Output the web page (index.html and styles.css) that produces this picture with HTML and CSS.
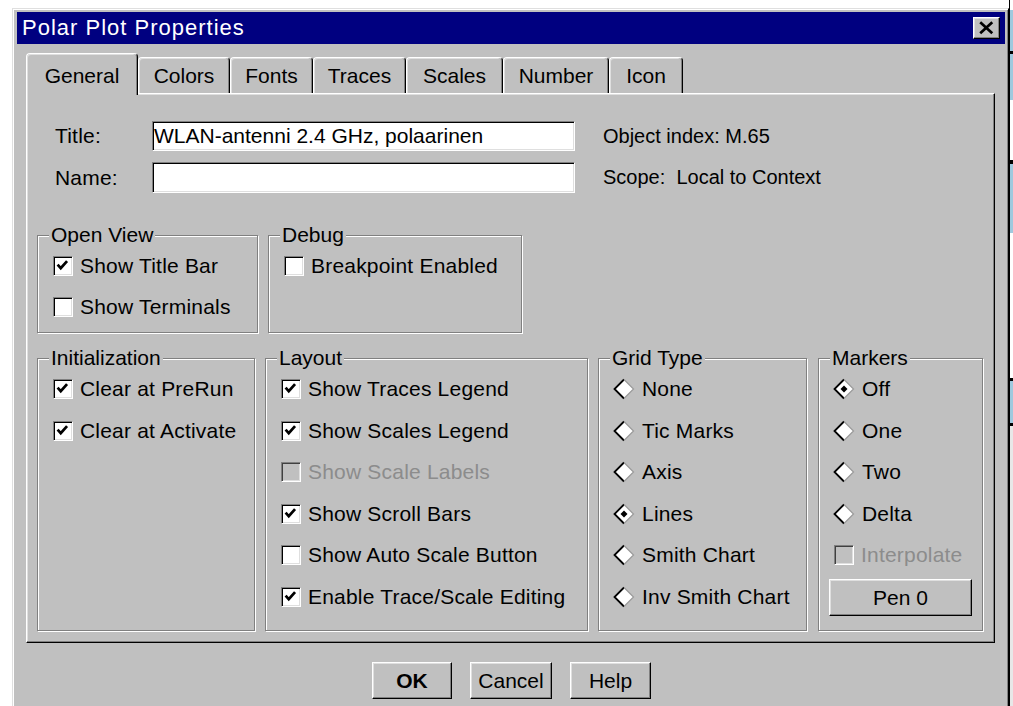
FILE: index.html
```html
<!DOCTYPE html>
<html lang="en">
<head>
<meta charset="utf-8">
<title>Polar Plot Properties</title>
<link rel="stylesheet" href="styles.css">
</head>
<body>
<div class="desk">
  <div class="dialog">
    <div class="titlebar">
      <span class="title-text">Polar Plot Properties</span>
      <button class="close-btn" type="button" aria-label="Close">
        <svg width="27" height="22" viewBox="0 0 27 22"><path d="M7.5 5 L20 16.5 M20 5 L7.5 16.5" stroke="#000" stroke-width="2.8" fill="none"/></svg>
      </button>
    </div>

    <div class="dialog-body">
      <div class="tabs">
        <div class="tab active w-general">General</div>
        <div class="tab w-colors">Colors</div>
        <div class="tab w-fonts">Fonts</div>
        <div class="tab w-traces">Traces</div>
        <div class="tab w-scales">Scales</div>
        <div class="tab w-number">Number</div>
        <div class="tab w-icon">Icon</div>
      </div>

      <div class="panel">
        <div class="ident">
          <span class="field-label">Title:</span>
          <div class="textbox h30">WLAN-antenni 2.4 GHz, polaarinen</div>
          <span class="info">Object index: M.65</span>
          <span class="field-label">Name:</span>
          <div class="textbox h31"></div>
          <span class="info">Scope:  Local to Context</span>
        </div>

        <div class="group-row row-one">
          <div class="group w-openview">
            <div class="group-title">Open View</div>
            <div class="opt"><span class="check"><svg viewBox="0 0 20 20"><polyline points="4,8.5 7.5,12.5 14.5,4.5"/></svg></span><span>Show Title Bar</span></div>
            <div class="opt"><span class="check"></span><span>Show Terminals</span></div>
          </div>
          <div class="group w-debug">
            <div class="group-title">Debug</div>
            <div class="opt"><span class="check"></span><span>Breakpoint Enabled</span></div>
          </div>
        </div>

        <div class="group-row row-two">
          <div class="group w-init">
            <div class="group-title">Initialization</div>
            <div class="opt"><span class="check"><svg viewBox="0 0 20 20"><polyline points="4,8.5 7.5,12.5 14.5,4.5"/></svg></span><span>Clear at PreRun</span></div>
            <div class="opt"><span class="check"><svg viewBox="0 0 20 20"><polyline points="4,8.5 7.5,12.5 14.5,4.5"/></svg></span><span>Clear at Activate</span></div>
          </div>

          <div class="group w-layout">
            <div class="group-title">Layout</div>
            <div class="opt"><span class="check"><svg viewBox="0 0 20 20"><polyline points="4,8.5 7.5,12.5 14.5,4.5"/></svg></span><span>Show Traces Legend</span></div>
            <div class="opt"><span class="check"><svg viewBox="0 0 20 20"><polyline points="4,8.5 7.5,12.5 14.5,4.5"/></svg></span><span>Show Scales Legend</span></div>
            <div class="opt disabled"><span class="check"></span><span>Show Scale Labels</span></div>
            <div class="opt"><span class="check"><svg viewBox="0 0 20 20"><polyline points="4,8.5 7.5,12.5 14.5,4.5"/></svg></span><span>Show Scroll Bars</span></div>
            <div class="opt"><span class="check"></span><span>Show Auto Scale Button</span></div>
            <div class="opt"><span class="check"><svg viewBox="0 0 20 20"><polyline points="4,8.5 7.5,12.5 14.5,4.5"/></svg></span><span>Enable Trace/Scale Editing</span></div>
          </div>

          <div class="group w-grid">
            <div class="group-title">Grid Type</div>
            <div class="opt radio"><svg class="diamond" viewBox="0 0 22 22"><polygon points="11,1.5 20.5,11 11,20.5 1.5,11" fill="#fff"/><polyline points="11,20.5 1.5,11 11,1.5" fill="none" stroke="#000" stroke-width="1.8"/><polyline points="11,1.5 20.5,11 11,20.5" fill="none" stroke="#9a9a9a" stroke-width="1.2"/></svg><span>None</span></div>
            <div class="opt radio"><svg class="diamond" viewBox="0 0 22 22"><polygon points="11,1.5 20.5,11 11,20.5 1.5,11" fill="#fff"/><polyline points="11,20.5 1.5,11 11,1.5" fill="none" stroke="#000" stroke-width="1.8"/><polyline points="11,1.5 20.5,11 11,20.5" fill="none" stroke="#9a9a9a" stroke-width="1.2"/></svg><span>Tic Marks</span></div>
            <div class="opt radio"><svg class="diamond" viewBox="0 0 22 22"><polygon points="11,1.5 20.5,11 11,20.5 1.5,11" fill="#fff"/><polyline points="11,20.5 1.5,11 11,1.5" fill="none" stroke="#000" stroke-width="1.8"/><polyline points="11,1.5 20.5,11 11,20.5" fill="none" stroke="#9a9a9a" stroke-width="1.2"/></svg><span>Axis</span></div>
            <div class="opt radio"><svg class="diamond" viewBox="0 0 22 22"><polygon points="11,1.5 20.5,11 11,20.5 1.5,11" fill="#fff"/><polyline points="11,20.5 1.5,11 11,1.5" fill="none" stroke="#000" stroke-width="1.8"/><polyline points="11,1.5 20.5,11 11,20.5" fill="none" stroke="#9a9a9a" stroke-width="1.2"/><polygon points="11,7.5 14.5,11 11,14.5 7.5,11" fill="#000"/></svg><span>Lines</span></div>
            <div class="opt radio"><svg class="diamond" viewBox="0 0 22 22"><polygon points="11,1.5 20.5,11 11,20.5 1.5,11" fill="#fff"/><polyline points="11,20.5 1.5,11 11,1.5" fill="none" stroke="#000" stroke-width="1.8"/><polyline points="11,1.5 20.5,11 11,20.5" fill="none" stroke="#9a9a9a" stroke-width="1.2"/></svg><span>Smith Chart</span></div>
            <div class="opt radio"><svg class="diamond" viewBox="0 0 22 22"><polygon points="11,1.5 20.5,11 11,20.5 1.5,11" fill="#fff"/><polyline points="11,20.5 1.5,11 11,1.5" fill="none" stroke="#000" stroke-width="1.8"/><polyline points="11,1.5 20.5,11 11,20.5" fill="none" stroke="#9a9a9a" stroke-width="1.2"/></svg><span>Inv Smith Chart</span></div>
          </div>

          <div class="group w-markers">
            <div class="group-title">Markers</div>
            <div class="opt radio"><svg class="diamond" viewBox="0 0 22 22"><polygon points="11,1.5 20.5,11 11,20.5 1.5,11" fill="#fff"/><polyline points="11,20.5 1.5,11 11,1.5" fill="none" stroke="#000" stroke-width="1.8"/><polyline points="11,1.5 20.5,11 11,20.5" fill="none" stroke="#9a9a9a" stroke-width="1.2"/><polygon points="11,7.5 14.5,11 11,14.5 7.5,11" fill="#000"/></svg><span>Off</span></div>
            <div class="opt radio"><svg class="diamond" viewBox="0 0 22 22"><polygon points="11,1.5 20.5,11 11,20.5 1.5,11" fill="#fff"/><polyline points="11,20.5 1.5,11 11,1.5" fill="none" stroke="#000" stroke-width="1.8"/><polyline points="11,1.5 20.5,11 11,20.5" fill="none" stroke="#9a9a9a" stroke-width="1.2"/></svg><span>One</span></div>
            <div class="opt radio"><svg class="diamond" viewBox="0 0 22 22"><polygon points="11,1.5 20.5,11 11,20.5 1.5,11" fill="#fff"/><polyline points="11,20.5 1.5,11 11,1.5" fill="none" stroke="#000" stroke-width="1.8"/><polyline points="11,1.5 20.5,11 11,20.5" fill="none" stroke="#9a9a9a" stroke-width="1.2"/></svg><span>Two</span></div>
            <div class="opt radio"><svg class="diamond" viewBox="0 0 22 22"><polygon points="11,1.5 20.5,11 11,20.5 1.5,11" fill="#fff"/><polyline points="11,20.5 1.5,11 11,1.5" fill="none" stroke="#000" stroke-width="1.8"/><polyline points="11,1.5 20.5,11 11,20.5" fill="none" stroke="#9a9a9a" stroke-width="1.2"/></svg><span>Delta</span></div>
            <div class="opt disabled"><span class="check"></span><span>Interpolate</span></div>
            <button class="btn pen-btn" type="button">Pen 0</button>
          </div>
        </div>
      </div>

      <div class="actions">
        <button class="btn w-ok" type="button"><b>OK</b></button>
        <button class="btn w-cancel" type="button">Cancel</button>
        <button class="btn w-help" type="button">Help</button>
      </div>
    </div>
  </div>
  <div class="backdrop-strip"></div>
</div>
</body>
</html>
```
FILE: styles.css
```css
html, body {
  margin: 0;
  padding: 0;
  background: #fff;
  overflow: hidden;
}

body {
  font-family: "Liberation Sans", Arial, sans-serif;
  font-size: 21px;
  color: #000;
}

.desk {
  display: flex;
  align-items: flex-start;
  height: 706px;
}

/* window frame */
.dialog {
  box-sizing: border-box;
  width: 997px;
  height: 720px;
  margin: 8px 0 0 12px;
  padding: 3px 3px 0 4px;
  background: #c0c0c0;
  border: 1px solid;
  border-color: #dfdfdf #000 #000 #dfdfdf;
  box-shadow: inset 1px 1px #fff, inset -1px -1px #808080;
}

.titlebar {
  height: 32px;
  background: #000080;
  display: flex;
  align-items: center;
  justify-content: space-between;
  padding: 0 5px 0 5px;
}

.title-text {
  color: #fff;
  font-size: 22px;
  letter-spacing: 1px;
}

.close-btn {
  box-sizing: border-box;
  width: 27px;
  height: 22px;
  padding: 0;
  margin: 0;
  background: #c0c0c0;
  border: 1px solid;
  border-color: #fff #000 #000 #fff;
  box-shadow: inset -1px -1px #808080, inset 1px 1px #dfdfdf;
  display: flex;
}

.close-btn svg {
  display: block;
  margin: -1px 0 0 -1px;
}

.dialog-body {
  padding: 9px 10px 0 9px;
}

/* tab strip */
.tabs {
  display: flex;
  align-items: flex-end;
  height: 40px;
}

.tab {
  box-sizing: border-box;
  height: 36px;
  padding-top: 6px;
  line-height: 24px;
  text-align: center;
  background: #c0c0c0;
  border-top: 1px solid #fff;
  border-left: 1px solid #fff;
  border-right: 1px solid #000;
  border-radius: 4px 4px 0 0;
  box-shadow: inset -1px 0 #808080, inset 1px 1px #dfdfdf;
}

.tab.active {
  height: 42px;
  padding-top: 10px;
  margin-bottom: -2px;
  position: relative;
  z-index: 1;
}

.w-general { width: 112px; }
.w-colors { width: 92px; }
.w-fonts { width: 83px; }
.w-traces { width: 93px; }
.w-scales { width: 97px; }
.w-number { width: 106px; }
.w-icon { width: 74px; }

/* page under the tabs */
.panel {
  box-sizing: border-box;
  height: 550px;
  padding: 27px 11px 0 10px;
  border: 1px solid;
  border-color: #fff #000 #000 #fff;
  box-shadow: inset -1px -1px #808080, inset 1px 1px #dfdfdf;
}

.ident {
  display: grid;
  grid-template-columns: 97px 423px auto;
  grid-template-rows: 30px 31px;
  row-gap: 11px;
  align-items: center;
  margin-left: 18px;
}

.field-label {
  letter-spacing: 0.2px;
}

.textbox {
  box-sizing: border-box;
  height: 100%;
  background: #fff;
  border: 1px solid;
  border-color: #808080 #fff #fff #808080;
  box-shadow: inset 1px 1px #000, inset -1px -1px #dfdfdf;
  padding: 0 0 0 1px;
  line-height: 28px;
  white-space: nowrap;
  overflow: hidden;
}

.info {
  margin-left: 28px;
  font-size: 20px;
  white-space: pre;
}

/* group boxes */
.group-row {
  display: flex;
  align-items: stretch;
  gap: 10px;
}

.row-one { margin-top: 32px; }
.row-two { margin-top: 15px; }

.group {
  box-sizing: border-box;
  margin-top: 10px;
  padding: 0 0 4px 11px;
  border: 1px solid #808080;
  box-shadow: inset 1px 1px #fff, 1px 1px #fff;
}

.row-two .group { padding-bottom: 12px; }

.group-title {
  width: fit-content;
  margin-top: -11px;
  padding: 0 2px;
  line-height: 20px;
  height: 20px;
  background: #c0c0c0;
}

.w-openview { width: 221px; }
.w-debug { width: 254px; }
.w-init { width: 218px; }
.w-layout { width: 323px; }
.w-grid { width: 209px; }
.w-markers { width: 165px; margin-left: 1px; }

.opt {
  display: flex;
  align-items: center;
  gap: 7px;
  height: 41.6px;
  margin-left: 4px;
  letter-spacing: 0.2px;
  white-space: nowrap;
}

.opt.radio { margin-left: 3px; }

.check {
  box-sizing: border-box;
  flex: none;
  width: 20px;
  height: 20px;
  background: #fff;
  border: 1px solid;
  border-color: #808080 #fff #fff #808080;
  box-shadow: inset 1px 1px #000, inset -1px -1px #dfdfdf;
  display: flex;
}

.check svg {
  width: 18px;
  height: 18px;
}

.check polyline {
  fill: none;
  stroke: #000;
  stroke-width: 3;
}

.opt.disabled {
  color: #8c8c8c;
}

.opt.disabled .check {
  background: #c0c0c0;
  box-shadow: inset 1px 1px #404040, inset -1px -1px #dfdfdf;
}

.diamond {
  flex: none;
  width: 22px;
  height: 22px;
}

/* push buttons */
.btn {
  box-sizing: border-box;
  height: 37px;
  margin: 0;
  padding: 0;
  font-family: inherit;
  font-size: 21px;
  color: #000;
  background: #c0c0c0;
  border: 1px solid;
  border-color: #fff #000 #000 #fff;
  box-shadow: inset -1px -1px #808080, inset 1px 1px #dfdfdf;
}

.pen-btn {
  width: 143px;
  margin: 3px 0 0 -1px;
}

.actions {
  display: flex;
  justify-content: center;
  gap: 18px;
  margin-top: 19px;
  padding-left: 2px;
}

.w-ok { width: 80px; }
.w-cancel { width: 82px; }
.w-help { width: 81px; }

/* part of the window behind the dialog */
.backdrop-strip {
  flex: none;
  width: 4px;
  height: 706px;
  border-left: 1px solid #000;
  box-sizing: border-box;
  background: linear-gradient(to bottom,
    #fff 0 10px,
    #9fc9de 10px 51px,
    #000 51px 54px,
    #9fc9de 54px 100px,
    #fff 100px 160px,
    #000 160px 164px,
    #9fc9de 164px 233px,
    #fff 233px 378px,
    #000 378px 381px,
    #9fc9de 381px 423px,
    #000 423px 426px,
    #e8e8e8 426px 706px);
}
```
